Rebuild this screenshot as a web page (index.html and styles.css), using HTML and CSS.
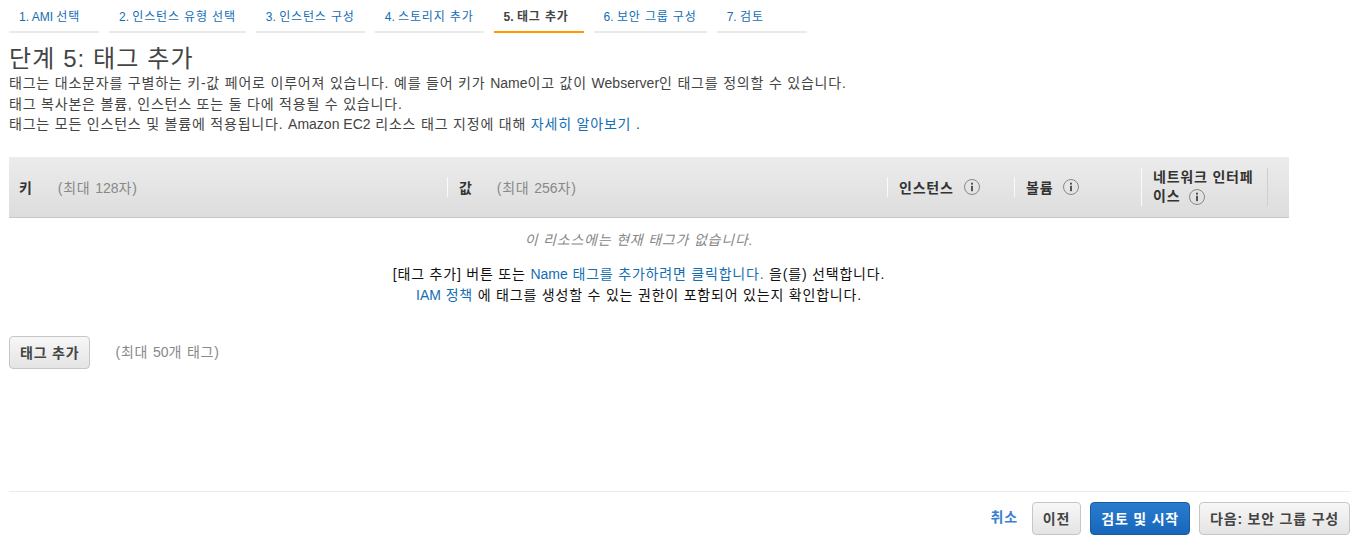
FILE: index.html
```html
<!DOCTYPE html>
<html lang="ko">
<head>
  <meta charset="UTF-8">
  <title>단계 5: 태그 추가</title>
  <link rel="stylesheet" href="styles.css">
</head>
<body>
  <nav class="steps">
    <a class="step"><span class="lat">1. AMI </span>선택</a>
    <a class="step"><span class="lat">2. </span>인스턴스 유형 선택</a>
    <a class="step"><span class="lat">3. </span>인스턴스 구성</a>
    <a class="step"><span class="lat">4. </span>스토리지 추가</a>
    <a class="step active"><span class="lat">5. </span>태그 추가</a>
    <a class="step"><span class="lat">6. </span>보안 그룹 구성</a>
    <a class="step"><span class="lat">7. </span>검토</a>
  </nav>

  <main class="content">
    <h1>단계 5: 태그 추가</h1>
    <div class="intro">
      <p>태그는 대소문자를 구별하는 키-값 페어로 이루어져 있습니다. 예를 들어 키가 <span class="lat">Name</span>이고 값이 <span class="lat">Webserver</span>인 태그를 정의할 수 있습니다.</p>
      <p>태그 복사본은 볼륨, 인스턴스 또는 둘 다에 적용될 수 있습니다.</p>
      <p>태그는 모든 인스턴스 및 볼륨에 적용됩니다. <span class="lat">Amazon EC2</span> 리소스 태그 지정에 대해 <a class="link">자세히 알아보기</a> .</p>
    </div>

    <div class="tag-head">
      <div class="col"><b>키</b><span class="hint">(최대 <span class="lat">128</span>자)</span></div>
      <div class="col"><b>값</b><span class="hint">(최대 <span class="lat">256</span>자)</span></div>
      <div class="col"><b>인스턴스</b>
        <svg class="info" viewBox="0 0 16 16"><circle cx="8" cy="8" r="7.5"/><rect x="7" y="6.8" width="2" height="5.4"/><rect x="7" y="3.7" width="2" height="1.9"/></svg>
      </div>
      <div class="col"><b>볼륨</b>
        <svg class="info" viewBox="0 0 16 16"><circle cx="8" cy="8" r="7.5"/><rect x="7" y="6.8" width="2" height="5.4"/><rect x="7" y="3.7" width="2" height="1.9"/></svg>
      </div>
      <div class="col col-wrap"><b>네트워크 인터페이스
        <svg class="info" viewBox="0 0 16 16"><circle cx="8" cy="8" r="7.5"/><rect x="7" y="6.8" width="2" height="5.4"/><rect x="7" y="3.7" width="2" height="1.9"/></svg></b>
      </div>
    </div>

    <div class="empty">
      <p class="empty-title">이 리소스에는 현재 태그가 없습니다.</p>
      <p>[태그 추가] 버튼 또는 <a class="link"><span class="lat">Name</span> 태그를 추가하려면 클릭합니다.</a> 을(를) 선택합니다.</p>
      <p><a class="link"><span class="lat">IAM</span> 정책</a> 에 태그를 생성할 수 있는 권한이 포함되어 있는지 확인합니다.</p>
    </div>

    <div class="add-row">
      <button class="btn">태그 추가</button>
      <span class="hint">(최대 <span class="lat">50</span>개 태그)</span>
    </div>
  </main>

  <footer class="actions">
    <a class="cancel">취소</a>
    <button class="btn">이전</button>
    <button class="btn btn-primary">검토 및 시작</button>
    <button class="btn">다음: 보안 그룹 구성</button>
  </footer>
</body>
</html>
```

FILE: styles.css
```css
html, body {
  height: 540px;
  overflow: hidden;
}

body {
  margin: 0;
  padding: 0 5px 0 9px;
  display: flex;
  flex-direction: column;
  font-family: "Liberation Sans", "Noto Sans CJK KR", sans-serif;
  font-size: 14px;
  letter-spacing: 0.8px;
  color: #444;
  background-color: #fff;
}

p {
  margin: 0;
}

.lat {
  letter-spacing: 0;
}

.link {
  color: #146eb4;
}

/* step tabs */
.steps {
  display: flex;
  gap: 10px;
  height: 33px;
}

.step {
  box-sizing: border-box;
  min-width: 90px;
  height: 33px;
  padding: 9px 10px 0;
  border-bottom: 2px solid #eaeaea;
  font-size: 12px;
  line-height: 16px;
  letter-spacing: 0.85px;
  color: #146eb4;
  white-space: nowrap;
}

.step.active {
  border-bottom-color: #f90;
  color: #444;
  font-weight: bold;
}

.content {
  flex: 1;
  padding-right: 61px;
}

h1 {
  margin: 11px 0 0;
  font-size: 24px;
  font-weight: normal;
  line-height: 29px;
  letter-spacing: 1.1px;
  color: #444;
}

.intro {
  line-height: 20.5px;
}

/* tag table header */
.tag-head {
  box-sizing: border-box;
  display: grid;
  grid-template-columns: 438px 440px 127px 127px 127px 21px;
  align-items: center;
  height: 61px;
  margin-top: 22.5px;
  padding-bottom: 1px;
  border-bottom: 1px solid #c8c8c8;
  background: linear-gradient(#ececec, #dddddd);
}

.col {
  box-sizing: border-box;
  display: flex;
  align-items: center;
  min-height: 19px;
  padding-left: 11px;
  border-left: 1px solid #fafafa;
  color: #333;
}

.col:first-child {
  padding-left: 10px;
  border-left: none;
}

.col:nth-child(2) .hint {
  margin-left: 24px;
}

.col-wrap {
  display: block;
  height: 38px;
  padding-right: 10px;
  line-height: 19px;
  border-right: 1px solid #cfcfcf;
}

.hint {
  margin-left: 25px;
  color: #888;
}

.info {
  flex: none;
  width: 16px;
  height: 16px;
  margin-left: 10px;
  vertical-align: -4px;
  fill: #555;
}

.col-wrap .info {
  margin-left: 4px;
}

.info circle {
  fill: none;
  stroke: #888;
  stroke-width: 1;
}

/* empty state */
.empty {
  padding-right: 20px;
  text-align: center;
  line-height: 21px;
  color: #111;
}

.empty-title {
  margin: 12px 0 13px;
  font-style: italic;
  color: #888;
}

.add-row {
  display: flex;
  align-items: center;
  margin-top: 30px;
}

.add-row .hint {
  margin-bottom: 3px;
}

.btn {
  box-sizing: border-box;
  height: 33px;
  padding: 0 10px 2px;
  border: 1px solid #c6c6c6;
  border-radius: 4px;
  background: linear-gradient(#f7f7f7, #e4e4e4);
  font-family: inherit;
  font-size: 14px;
  font-weight: bold;
  letter-spacing: inherit;
  color: #444;
}

.btn-primary {
  border-color: #1c5c9e;
  background: linear-gradient(#2a7ccf, #1667bb);
  color: #fff;
}

/* bottom bar */
.actions {
  display: flex;
  align-items: flex-start;
  justify-content: flex-end;
  gap: 9px;
  box-sizing: border-box;
  height: 49px;
  padding-top: 10px;
  border-top: 1px solid #eaeaea;
}

.cancel {
  margin-right: 5px;
  font-weight: bold;
  line-height: 31px;
  color: #3b7fd1;
}
```
